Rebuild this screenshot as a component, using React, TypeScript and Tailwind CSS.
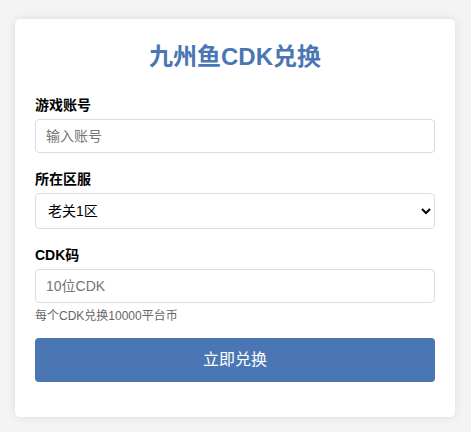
import React, { useState } from 'react';

export default function App() {
    const [account, setAccount] = useState('');
    const [server, setServer] = useState('老关1区');
    const [cdk, setCdk] = useState('');

    const handleSubmit = (e: React.FormEvent) => {
        e.preventDefault();
    };

    return (
        <div
            className="min-h-[432px] bg-[#f4f4f4] px-[15px] pt-[19px] pb-[15px]"
            style={{ fontFamily: '"Liberation Sans", "Noto Sans CJK SC", sans-serif' }}
        >
            <div className="w-[440px] bg-white rounded-[5px] shadow-[0_0_10px_rgba(0,0,0,0.1)] px-[20px] pt-[24px] pb-[35px]">
                <h2 className="text-[24px] leading-[28px] font-bold text-center text-[#4a77b4] mb-[24px]">九州鱼CDK兑换</h2>

                <form onSubmit={handleSubmit}>
                    <div className="mb-[16px]">
                        <label className="block text-[14px] leading-[20px] font-bold text-black mb-[4px]">游戏账号</label>
                        <input
                            type="text"
                            className="block w-full h-[34px] px-[10px] text-[14px] border border-[#dddddd] rounded-[4px] bg-white text-[#333] placeholder:text-[#757575] outline-none"
                            placeholder="输入账号"
                            value={account}
                            onChange={(e) => setAccount(e.target.value)}
                        />
                    </div>

                    <div className="mb-[16px]">
                        <label className="block text-[14px] leading-[20px] font-bold text-black mb-[4px]">所在区服</label>
                        <select
                            className="block w-full h-[36px] px-[8px] text-[14px] border border-[#dddddd] rounded-[4px] bg-white text-black outline-none"
                            value={server}
                            onChange={(e) => setServer(e.target.value)}
                        >
                            <option>老关1区</option>
                            <option>老关2区</option>
                        </select>
                    </div>

                    <div>
                        <label className="block text-[14px] leading-[20px] font-bold text-black mb-[4px]">CDK码</label>
                        <input
                            type="text"
                            className="block w-full h-[34px] px-[10px] text-[14px] border border-[#dddddd] rounded-[4px] bg-white text-[#333] placeholder:text-[#757575] outline-none"
                            placeholder="10位CDK"
                            value={cdk}
                            onChange={(e) => setCdk(e.target.value)}
                        />
                        <p className="mt-[5px] text-[12px] leading-[16px] text-[#666]">每个CDK兑换10000平台币</p>
                    </div>

                    <button
                        type="submit"
                        className="mt-[14px] block w-full h-[44px] rounded-[4px] bg-[#4a77b4] text-white text-[16px]"
                    >
                        立即兑换
                    </button>
                </form>
            </div>
        </div>
    );
}
